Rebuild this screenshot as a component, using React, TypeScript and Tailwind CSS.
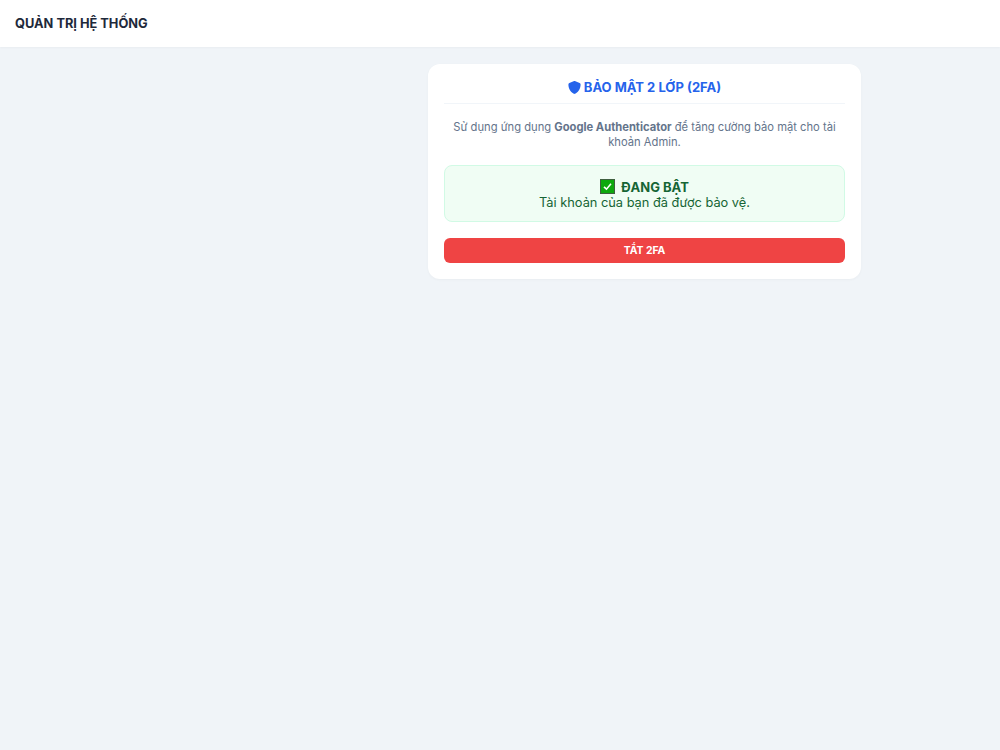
import { FaShield } from "react-icons/fa6";

export default function App() {
  return (
    <div className="min-h-[750px] bg-[#f0f4f8] font-['Inter',sans-serif]">
      {/* Header */}
      <header className="h-[47px] bg-white flex items-center px-[15px] shadow-[0_1px_2px_rgba(0,0,0,0.03)]">
        <h1 className="text-[12.8px] font-bold text-[#1e293b]">QUẢN TRỊ HỆ THỐNG</h1>
      </header>

      <main className="pt-[17px] pl-[428px]">
        <div className="w-[433px] bg-white rounded-[12px] p-4 shadow-[0_1px_3px_rgba(0,0,0,0.03)]">
          <div className="flex items-center justify-center gap-[3px] box-content h-[23px] -mt-[4px] pb-[4px] text-[13px] font-bold text-[#2563eb] border-b border-[#f1f5f9]">
            <FaShield className="w-[13px] h-[13px]" />
            <span>BẢO MẬT 2 LỚP (2FA)</span>
          </div>

          <p className="mt-[16px] text-center text-[11.2px] leading-[15px] text-[#64748b]">
            Sử dụng ứng dụng <b>Google Authenticator</b> để tăng cường bảo mật cho tài khoản Admin.
          </p>

          <div className="mt-[15px] h-[57px] pt-[2px] bg-[#f0fdf4] border border-[#d1fae5] rounded-[8px] flex flex-col items-center justify-center text-[#166534]">
            <div className="flex items-center gap-[6px] text-[13px] leading-[16px] font-bold">
              <svg viewBox="0 0 15 15" className="w-[15px] h-[15px]">
                <rect x="0.5" y="0.5" width="14" height="14" fill="#0ea80e" stroke="#3f5f3f" />
                <path d="M4 7.8 L6.5 10.2 L11 4.8" fill="none" stroke="#fff" strokeWidth="1.6" />
              </svg>
              <span>ĐANG BẬT</span>
            </div>
            <div className="text-[12.8px] leading-[16px]">Tài khoản của bạn đã được bảo vệ.</div>
          </div>

          <button className="block mt-[16px] w-full h-[25px] bg-[#ef4444] rounded-[6px] text-white text-[10.4px] font-bold">
            TẮT 2FA
          </button>
        </div>
      </main>
    </div>
  );
}
